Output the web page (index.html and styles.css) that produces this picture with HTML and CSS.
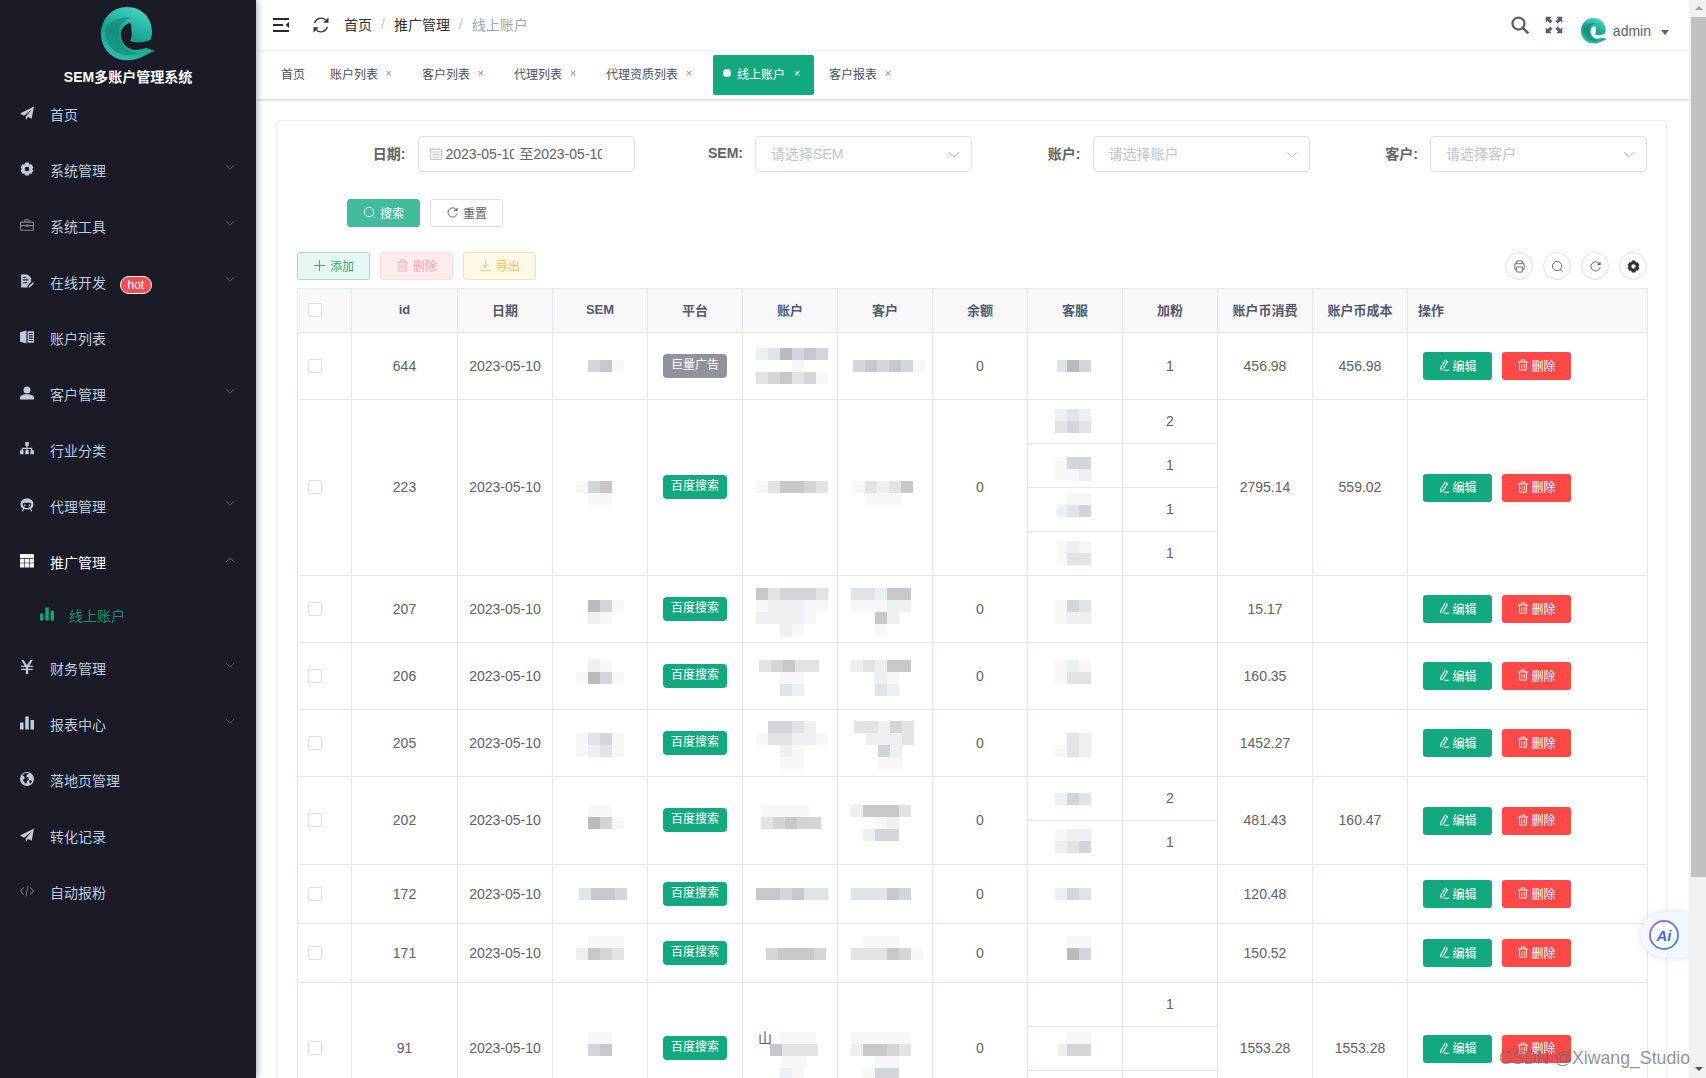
FILE: index.html
```html
<!DOCTYPE html>
<html lang="zh-CN">
<head>
<meta charset="utf-8">
<title>SEM多账户管理系统</title>
<link rel="stylesheet" href="styles.css">
</head>
<body>
<svg class="sprite" width="0" height="0">
  <defs>
    <linearGradient id="lg" x1="0.7" y1="0" x2="0.3" y2="1"><stop offset="0" stop-color="#43d8c0"/><stop offset="0.55" stop-color="#15a08e"/><stop offset="1" stop-color="#2fc3a8"/></linearGradient>
  </defs>
  <symbol id="logo" viewBox="0 0 54 54">
    <path fill="url(#lg)" d="M26 0C41 0 51 11 51 25c0 7-3 12-8 15l11 4c-7 2-14 8-24 9C12 55 0 42 0 27 0 12 11 0 26 0z"/>
    <path fill="#12806f" opacity=".55" d="M5 20C10 14 20 9 30 11 20 14 16 22 19 32c3 9 10 14 18 14-10 5-24 2-30-10C4 30 4 25 5 20z"/>
    <path class="pocket" d="M30 16c-8 1-11 8-10 14 1 7 7 12 13 13 5 0 10-1 14-3 3-2 5-4 9-7v-3c-4 2-8 4-14 5-6 1-13 0-13-2 3-2 1-11 1-17z"/>
  </symbol>
  <symbol id="i-plane" viewBox="0 0 24 24"><path d="M24 1 0 13l7 3.500L20 6 10 18v6l4-5 6 3z"/></symbol>
  <symbol id="i-gear" viewBox="0 0 24 24"><path fill-rule="evenodd" d="M9 1h6l1.500 3.500L20 4l3 6-2.500 2 2.500 2-3 6-3.500-.5L15 23H9l-1.500-3.500L4 20l-3-6 2.500-2L1 10l3-6 3.500.5zM12 8a4 4 0 1 0 0 8 4 4 0 0 0 0-8z"/></symbol>
  <symbol id="i-case" viewBox="0 0 24 24"><path fill-rule="evenodd" d="M8 2h8l1 4h5a2 2 0 0 1 2 2v12a2 2 0 0 1-2 2H2a2 2 0 0 1-2-2V8a2 2 0 0 1 2-2h5zm1.500 2L9 6h6l-.5-2zM2 8v4h8v-1h4v1h8V8zm0 6v6h20v-6h-8v1h-4v-1z"/></symbol>
  <symbol id="i-file" viewBox="0 0 24 24"><path fill-rule="evenodd" d="M2 1h11l6 6v6l-6 7v3H2zm3 8v2h10V9zm0 5v2h8v-2zm0-9v2h6V5z"/><path d="M22 14l2 2-7 7h-2v-2z"/></symbol>
  <symbol id="i-book" viewBox="0 0 24 24"><path d="M0 4l11-3v22L0 20z"/><path fill-rule="evenodd" d="M13 2h11v20H13zm2 3v2h7V5zm0 4v2h7V9zm0 4v2h7v-2zm0 4v2h7v-2z"/></symbol>
  <symbol id="i-user" viewBox="0 0 24 24"><circle cx="12" cy="7" r="6"/><path d="M0 23v-3c0-4 5-6 12-6s12 2 12 6v3z"/></symbol>
  <symbol id="i-tree" viewBox="0 0 24 24"><path d="M9 0h6v7h-2v3h8v4h3v7h-6v-7h1v-2h-6v2h2v7H9v-7h2v-2H5v2h1v7H0v-7h3v-4h8V7H9z"/></symbol>
  <symbol id="i-bot" viewBox="0 0 24 24"><path fill-rule="evenodd" d="M12 1c7 0 11 4 11 10 0 4-2 6-4 7l2 5h-2l-2-4c-3 1-7 1-10 0l-2 4H3l2-5c-2-1-4-3-4-7C1 5 5 1 12 1zM5 9c-1 4 2 8 7 8s8-4 7-8c-3-1-11-1-14 0zm3 2a1.500 1.500 0 1 1 0 3 1.500 1.500 0 0 1 0-3zm8 0a1.500 1.500 0 1 1 0 3 1.500 1.500 0 0 1 0-3z"/></symbol>
  <symbol id="i-table" viewBox="0 0 24 24"><path d="M0 0h24v7H0zM0 8h7.500v7H0zM8.500 8h7v7h-7zM16.500 8H24v7h-7.500zM0 16h7.500v7H0zM8.500 16h7v7h-7zM16.500 16H24v7h-7.500z"/></symbol>
  <symbol id="i-bars" viewBox="0 0 24 24"><path d="M0 11h6v12H0zM9 1h6v22H9zM18 7h6v16h-6z"/></symbol>
  <symbol id="i-yen" viewBox="0 0 24 24"><path d="M2 0h4l6 9 6-9h4l-6 10h6v2h-8v3h8v2h-8v7h-4v-7H2v-2h8v-3H2v-2h6z"/></symbol>
  <symbol id="i-globe" viewBox="0 0 24 24"><path fill-rule="evenodd" d="M12 0a12 12 0 1 1 0 24 12 12 0 0 1 0-24zM4 5c2 2 4 2 4 5s-3 2-3 4 3 2 4 6c2 1 3-2 3-4s4-2 3-5-4-1-4-4 3-3 4-5c-4-1-8 0-11 3zm14 9c-2 0-3 2-2 4s3 1 4-1-1-3-2-3z"/></symbol>
  <symbol id="i-code" viewBox="0 0 24 24"><path d="M6 5 0 12l6 7 1-1-5-6 5-6zM18 5l-1 1 5 6-5 6 1 1 6-7zM13 3h1.500L11 21H9.500z"/></symbol>
  <symbol id="i-chev" viewBox="0 0 12 8"><path fill="none" stroke="currentColor" d="M1 1l5 5 5-5"/></symbol>
  <symbol id="i-search" viewBox="0 0 24 24"><circle cx="10" cy="10" r="8" fill="none" stroke="currentColor" stroke-width="3"/><path d="M16 16l7 7" stroke="currentColor" stroke-width="3.500"/></symbol>
  <symbol id="i-full" viewBox="0 0 24 24"><path d="M1 1h8L6.500 3.500 10 7 7 10 3.500 6.500 1 9zM23 1v8l-2.500-2.500L17 10l-3-3 3.500-3.500L15 1zM1 23v-8l2.500 2.500L7 14l3 3-3.500 3.500L9 23zM23 23h-8l2.500-2.500L14 17l3-3 3.500 3.500L23 15z"/></symbol>
  <symbol id="i-menu" viewBox="0 0 16 14"><path d="M0 0h16v2H0zM0 6h10v2H0zM0 12h16v2H0zM16 4v6l-3.500-3z"/></symbol>
  <symbol id="i-sync" viewBox="0 0 24 24"><path fill="none" stroke="currentColor" stroke-width="1.800" d="M3.500 9.500A9 9 0 0 1 18.500 5.500M20.500 14.500A9 9 0 0 1 5.500 18.500"/><path d="M22 2v7h-7zM2 22v-7h7z"/></symbol>
  <symbol id="i-lens" viewBox="0 0 14 14"><circle cx="6.500" cy="6.500" r="5" fill="none" stroke="currentColor"/><path d="M10 10l2.500 2.500" stroke="currentColor"/></symbol>
  <symbol id="i-redo" viewBox="0 0 14 14"><path fill="none" stroke="currentColor" d="M11.500 4.500A5 5 0 1 0 12 8"/><path d="M12.500 1.500v4h-4z"/></symbol>
  <symbol id="i-trash" viewBox="0 0 14 14"><path fill="none" stroke="currentColor" d="M3 3.500v9.500h8V3.500M1 3.500h12M5 3.500V1h4v2.500M5.500 6v5M8.500 6v5"/></symbol>
  <symbol id="i-pen" viewBox="0 0 14 14"><path fill="none" stroke="currentColor" stroke-width="1.200" d="M8.500 1.500l2.500 1.500-5 8.500-2.500 1-.3-2.700zM7 13h6"/></symbol>
  <symbol id="i-plus" viewBox="0 0 14 14"><path d="M6.500 1h1v5.500H13v1H7.500V13h-1V7.500H1v-1h5.500z"/></symbol>
  <symbol id="i-down" viewBox="0 0 14 14"><path fill="none" stroke="currentColor" d="M7 1v8M4 6l3 3 3-3M2 12.500h10"/></symbol>
  <symbol id="i-print" viewBox="0 0 14 14"><path fill="none" stroke="currentColor" d="M4 4V1h6v3M3.500 10H2V4h10v6h-1.500M4 7.500h6V13H4z"/></symbol>
  <symbol id="i-cal" viewBox="0 0 14 14"><path fill="none" stroke="currentColor" d="M1.500 2.500h11v10h-11zM1.500 5h11M4 1v2M10 1v2M3.500 7.500h7M3.500 10h7"/></symbol>
</svg>

<aside class="sidebar">
  <div class="brand">
    <svg class="brand-logo"><use href="#logo"/></svg>
    <div class="brand-name">SEM多账户管理系统</div>
  </div>
  <ul class="menu">
    <li class="menu-item"><svg class="mi"><use href="#i-plane"/></svg><span>首页</span></li>
    <li class="menu-item"><svg class="mi"><use href="#i-gear"/></svg><span>系统管理</span><svg class="chev"><use href="#i-chev"/></svg></li>
    <li class="menu-item"><svg class="mi mi-dim"><use href="#i-case"/></svg><span>系统工具</span><svg class="chev"><use href="#i-chev"/></svg></li>
    <li class="menu-item"><svg class="mi"><use href="#i-file"/></svg><span>在线开发</span><b class="hot">hot</b><svg class="chev"><use href="#i-chev"/></svg></li>
    <li class="menu-item"><svg class="mi"><use href="#i-book"/></svg><span>账户列表</span></li>
    <li class="menu-item"><svg class="mi"><use href="#i-user"/></svg><span>客户管理</span><svg class="chev"><use href="#i-chev"/></svg></li>
    <li class="menu-item"><svg class="mi"><use href="#i-tree"/></svg><span>行业分类</span></li>
    <li class="menu-item"><svg class="mi"><use href="#i-bot"/></svg><span>代理管理</span><svg class="chev"><use href="#i-chev"/></svg></li>
    <li class="menu-item open"><svg class="mi"><use href="#i-table"/></svg><span>推广管理</span><svg class="chev up"><use href="#i-chev"/></svg></li>
    <li class="menu-sub"><svg class="mi"><use href="#i-bars"/></svg><span>线上账户</span></li>
    <li class="menu-item"><svg class="mi"><use href="#i-yen"/></svg><span>财务管理</span><svg class="chev"><use href="#i-chev"/></svg></li>
    <li class="menu-item"><svg class="mi"><use href="#i-bars"/></svg><span>报表中心</span><svg class="chev"><use href="#i-chev"/></svg></li>
    <li class="menu-item"><svg class="mi"><use href="#i-globe"/></svg><span>落地页管理</span></li>
    <li class="menu-item"><svg class="mi"><use href="#i-plane"/></svg><span>转化记录</span></li>
    <li class="menu-item"><svg class="mi mi-dim"><use href="#i-code"/></svg><span>自动报粉</span></li>
  </ul>
</aside>

<main class="main">
  <header class="topbar">
    <svg class="tb-menu"><use href="#i-menu"/></svg>
    <svg class="tb-sync"><use href="#i-sync"/></svg>
    <nav class="crumbs"><span>首页</span><i>/</i><span>推广管理</span><i>/</i><span class="crumb-now">线上账户</span></nav>
    <div class="tb-right">
      <svg class="tb-icon"><use href="#i-search"/></svg>
      <svg class="tb-icon"><use href="#i-full"/></svg>
      <svg class="avatar"><use href="#logo"/></svg>
      <span class="admin">admin</span>
      <i class="caret"></i>
    </div>
  </header>
  <div class="tabs">
    <span class="tab tab-first">首页</span>
    <span class="tab">账户列表<i>×</i></span>
    <span class="tab">客户列表<i>×</i></span>
    <span class="tab">代理列表<i>×</i></span>
    <span class="tab">代理资质列表<i>×</i></span>
    <span class="tab tab-on"><u></u>线上账户<i>×</i></span>
    <span class="tab tab-last">客户报表<i>×</i></span>
  </div>

  <section class="content">
    <div class="card">
      <form class="filters">
        <label class="field"><b>日期:</b>
          <span class="input"><svg class="cal"><use href="#i-cal"/></svg><span class="dv">2023-05-10</span><span class="sep">至</span><span class="dv">2023-05-10</span></span>
        </label>
        <label class="field"><b>SEM:</b><span class="input sel">请选择SEM<svg class="sel-chev"><use href="#i-chev"/></svg></span></label>
        <label class="field"><b>账户:</b><span class="input sel">请选择账户<svg class="sel-chev"><use href="#i-chev"/></svg></span></label>
        <label class="field"><b>客户:</b><span class="input sel">请选择客户<svg class="sel-chev"><use href="#i-chev"/></svg></span></label>
      </form>
      <div class="search-row">
        <span class="btn btn-search"><svg><use href="#i-lens"/></svg>搜索</span>
        <span class="btn btn-reset"><svg><use href="#i-redo"/></svg>重置</span>
      </div>
      <div class="toolbar">
        <span class="btn btn-add"><svg><use href="#i-plus"/></svg>添加</span>
        <span class="btn btn-del"><svg><use href="#i-trash"/></svg>删除</span>
        <span class="btn btn-exp"><svg><use href="#i-down"/></svg>导出</span>
        <span class="tools">
          <span class="round"><svg><use href="#i-print"/></svg></span>
          <span class="round"><svg><use href="#i-lens"/></svg></span>
          <span class="round"><svg><use href="#i-redo"/></svg></span>
          <span class="round"><svg class="dark"><use href="#i-gear"/></svg></span>
        </span>
      </div>
      <table class="grid">
        <colgroup><col class="w54"><col class="w106"><col class="w95"><col class="w95"><col class="w95"><col class="w95"><col class="w95"><col class="w95"><col class="w95"><col class="w95"><col class="w95"><col class="w95"><col class="w240"></colgroup>
        <thead>
          <tr><th class="ck"><i class="box"></i></th><th>id</th><th>日期</th><th>SEM</th><th>平台</th><th>账户</th><th>客户</th><th>余额</th><th>客服</th><th>加粉</th><th>账户币消费</th><th>账户币成本</th><th class="left">操作</th></tr>
        </thead>
        <tbody>
          <tr class="h67">
            <td class="ck"><i class="box"></i></td><td>644</td><td>2023-05-10</td>
            <td class="m"><svg class="mos"><rect x="30" y="16" class="c"/><rect x="42" y="16" class="b"/><rect x="54" y="16" class="f"/></svg></td>
            <td><span class="tag tag-gray">巨量广告</span></td>
            <td class="m"><svg class="mos"><rect x="8" y="4" class="e"/><rect x="20" y="4" class="d"/><rect x="32" y="4" class="a"/><rect x="44" y="4" class="c"/><rect x="56" y="4" class="b"/><rect x="68" y="4" class="c"/><rect x="44" y="16" class="f"/><rect x="8" y="28" class="d"/><rect x="20" y="28" class="c"/><rect x="32" y="28" class="b"/><rect x="44" y="28" class="d"/><rect x="56" y="28" class="c"/><rect x="68" y="28" class="f"/></svg></td>
            <td class="m"><svg class="mos"><rect x="10" y="16" class="c"/><rect x="22" y="16" class="b"/><rect x="34" y="16" class="c"/><rect x="46" y="16" class="b"/><rect x="58" y="16" class="c"/><rect x="70" y="16" class="f"/></svg></td>
            <td>0</td>
            <td class="m"><svg class="mos"><rect x="24" y="16" class="d"/><rect x="34" y="16" class="a"/><rect x="46" y="16" class="c"/></svg></td>
            <td>1</td><td>456.98</td><td>456.98</td>
            <td class="left"><span class="acts"><span class="act act-edit"><svg><use href="#i-pen"/></svg>编辑</span><span class="act act-del"><svg><use href="#i-trash"/></svg>删除</span></span></td>
          </tr>

          <tr class="h44">
            <td rowspan="4" class="ck"><i class="box"></i></td><td rowspan="4">223</td><td rowspan="4">2023-05-10</td>
            <td rowspan="4" class="m"><svg class="mos"><rect x="18" y="15" class="f"/><rect x="30" y="15" class="c"/><rect x="42" y="15" class="b"/><rect x="30" y="27" class="f"/><rect x="42" y="27" class="f"/></svg></td>
            <td rowspan="4"><span class="tag">百度搜索</span></td>
            <td rowspan="4" class="m"><svg class="mos"><rect x="8" y="15" class="f"/><rect x="20" y="15" class="d"/><rect x="32" y="15" class="b"/><rect x="44" y="15" class="b"/><rect x="56" y="15" class="c"/><rect x="68" y="15" class="d"/></svg></td>
            <td rowspan="4" class="m"><svg class="mos"><rect x="10" y="15" class="f"/><rect x="22" y="15" class="d"/><rect x="34" y="15" class="e"/><rect x="46" y="15" class="d"/><rect x="58" y="15" class="b"/><rect x="22" y="27" class="f"/><rect x="34" y="27" class="f"/><rect x="46" y="27" class="f"/></svg></td>
            <td rowspan="4">0</td>
            <td class="m"><svg class="mos"><rect x="22" y="9" class="e"/><rect x="34" y="9" class="d"/><rect x="46" y="9" class="e"/><rect x="22" y="21" class="d"/><rect x="34" y="21" class="c"/><rect x="46" y="21" class="d"/></svg></td>
            <td>2</td>
            <td rowspan="4">2795.14</td><td rowspan="4">559.02</td>
            <td rowspan="4" class="left"><span class="acts"><span class="act act-edit"><svg><use href="#i-pen"/></svg>编辑</span><span class="act act-del"><svg><use href="#i-trash"/></svg>删除</span></span></td>
          </tr>
          <tr class="h44"><td class="m"><svg class="mos"><rect x="22" y="13" class="f"/><rect x="34" y="13" class="c"/><rect x="46" y="13" class="c"/><rect x="22" y="25" class="f"/><rect x="34" y="25" class="f"/><rect x="46" y="25" class="e"/></svg></td><td>1</td></tr>
          <tr class="h44"><td class="m"><svg class="mos"><rect x="34" y="5" class="f"/><rect x="46" y="5" class="f"/><rect x="24" y="17" class="e"/><rect x="34" y="17" class="d"/><rect x="46" y="17" class="c"/></svg></td><td>1</td></tr>
          <tr class="h44"><td class="m"><svg class="mos"><rect x="24" y="9" class="f"/><rect x="34" y="9" class="e"/><rect x="46" y="9" class="f"/><rect x="24" y="21" class="f"/><rect x="34" y="21" class="d"/><rect x="46" y="21" class="d"/></svg></td><td>1</td></tr>

          <tr class="h67">
            <td class="ck"><i class="box"></i></td><td>207</td><td>2023-05-10</td>
            <td class="m"><svg class="mos"><rect x="30" y="13" class="a"/><rect x="42" y="13" class="c"/><rect x="54" y="13" class="f"/><rect x="30" y="25" class="e"/><rect x="42" y="25" class="f"/></svg></td>
            <td><span class="tag">百度搜索</span></td>
            <td class="m"><svg class="mos"><rect x="8" y="1" class="b"/><rect x="20" y="1" class="d"/><rect x="32" y="1" class="c"/><rect x="44" y="1" class="c"/><rect x="56" y="1" class="c"/><rect x="68" y="1" class="d"/><rect x="8" y="13" class="f"/><rect x="20" y="13" class="e"/><rect x="32" y="13" class="e"/><rect x="44" y="13" class="e"/><rect x="56" y="13" class="f"/><rect x="68" y="13" class="f"/><rect x="8" y="25" class="e"/><rect x="20" y="25" class="e"/><rect x="32" y="25" class="e"/><rect x="44" y="25" class="e"/><rect x="56" y="25" class="f"/><rect x="32" y="37" class="e"/><rect x="44" y="37" class="f"/></svg></td>
            <td class="m"><svg class="mos"><rect x="8" y="1" class="d"/><rect x="20" y="1" class="d"/><rect x="32" y="1" class="e"/><rect x="44" y="1" class="b"/><rect x="56" y="1" class="b"/><rect x="8" y="13" class="f"/><rect x="20" y="13" class="f"/><rect x="32" y="13" class="f"/><rect x="44" y="13" class="e"/><rect x="56" y="13" class="e"/><rect x="32" y="25" class="b"/><rect x="44" y="25" class="e"/><rect x="32" y="37" class="f"/></svg></td>
            <td>0</td>
            <td class="m"><svg class="mos"><rect x="22" y="13" class="f"/><rect x="34" y="13" class="c"/><rect x="46" y="13" class="d"/><rect x="22" y="25" class="f"/><rect x="34" y="25" class="e"/><rect x="46" y="25" class="e"/></svg></td>
            <td></td><td>15.17</td><td></td>
            <td class="left"><span class="acts"><span class="act act-edit"><svg><use href="#i-pen"/></svg>编辑</span><span class="act act-del"><svg><use href="#i-trash"/></svg>删除</span></span></td>
          </tr>

          <tr class="h67">
            <td class="ck"><i class="box"></i></td><td>206</td><td>2023-05-10</td>
            <td class="m"><svg class="mos"><rect x="30" y="6" class="e"/><rect x="42" y="6" class="f"/><rect x="18" y="18" class="f"/><rect x="30" y="18" class="a"/><rect x="42" y="18" class="c"/><rect x="54" y="18" class="f"/></svg></td>
            <td><span class="tag">百度搜索</span></td>
            <td class="m"><svg class="mos"><rect x="11" y="6" class="d"/><rect x="23" y="6" class="c"/><rect x="35" y="6" class="b"/><rect x="47" y="6" class="d"/><rect x="59" y="6" class="d"/><rect x="32" y="18" class="f"/><rect x="44" y="18" class="f"/><rect x="32" y="30" class="d"/><rect x="44" y="30" class="e"/></svg></td>
            <td class="m"><svg class="mos"><rect x="8" y="6" class="e"/><rect x="20" y="6" class="d"/><rect x="32" y="6" class="e"/><rect x="44" y="6" class="b"/><rect x="56" y="6" class="b"/><rect x="32" y="18" class="e"/><rect x="44" y="18" class="f"/><rect x="32" y="30" class="d"/><rect x="44" y="30" class="e"/></svg></td>
            <td>0</td>
            <td class="m"><svg class="mos"><rect x="22" y="6" class="f"/><rect x="34" y="6" class="e"/><rect x="46" y="6" class="f"/><rect x="22" y="18" class="f"/><rect x="34" y="18" class="d"/><rect x="46" y="18" class="d"/></svg></td>
            <td></td><td>160.35</td><td></td>
            <td class="left"><span class="acts"><span class="act act-edit"><svg><use href="#i-pen"/></svg>编辑</span><span class="act act-del"><svg><use href="#i-trash"/></svg>删除</span></span></td>
          </tr>

          <tr class="h67">
            <td class="ck"><i class="box"></i></td><td>205</td><td>2023-05-10</td>
            <td class="m"><svg class="mos"><rect x="18" y="12" class="f"/><rect x="30" y="12" class="d"/><rect x="42" y="12" class="c"/><rect x="54" y="12" class="f"/><rect x="18" y="24" class="f"/><rect x="30" y="24" class="e"/><rect x="42" y="24" class="d"/><rect x="54" y="24" class="f"/></svg></td>
            <td><span class="tag">百度搜索</span></td>
            <td class="m"><svg class="mos"><rect x="20" y="0" class="c"/><rect x="32" y="0" class="c"/><rect x="44" y="0" class="d"/><rect x="56" y="0" class="e"/><rect x="8" y="12" class="f"/><rect x="20" y="12" class="d"/><rect x="32" y="12" class="d"/><rect x="44" y="12" class="e"/><rect x="56" y="12" class="e"/><rect x="68" y="12" class="f"/><rect x="32" y="24" class="e"/><rect x="44" y="24" class="f"/><rect x="32" y="36" class="f"/><rect x="44" y="36" class="f"/></svg></td>
            <td class="m"><svg class="mos"><rect x="11" y="0" class="d"/><rect x="23" y="0" class="d"/><rect x="35" y="0" class="e"/><rect x="47" y="0" class="c"/><rect x="59" y="0" class="d"/><rect x="23" y="12" class="e"/><rect x="35" y="12" class="e"/><rect x="47" y="12" class="e"/><rect x="59" y="12" class="d"/><rect x="35" y="24" class="c"/><rect x="47" y="24" class="e"/><rect x="35" y="36" class="f"/><rect x="47" y="36" class="f"/></svg></td>
            <td>0</td>
            <td class="m"><svg class="mos"><rect x="34" y="12" class="d"/><rect x="46" y="12" class="e"/><rect x="22" y="24" class="f"/><rect x="34" y="24" class="d"/><rect x="46" y="24" class="e"/></svg></td>
            <td></td><td>1452.27</td><td></td>
            <td class="left"><span class="acts"><span class="act act-edit"><svg><use href="#i-pen"/></svg>编辑</span><span class="act act-del"><svg><use href="#i-trash"/></svg>删除</span></span></td>
          </tr>

          <tr class="h44">
            <td rowspan="2" class="ck"><i class="box"></i></td><td rowspan="2">202</td><td rowspan="2">2023-05-10</td>
            <td rowspan="2" class="m"><svg class="mos"><rect x="30" y="6" class="f"/><rect x="42" y="6" class="f"/><rect x="30" y="18" class="a"/><rect x="42" y="18" class="c"/><rect x="54" y="18" class="f"/></svg></td>
            <td rowspan="2"><span class="tag">百度搜索</span></td>
            <td rowspan="2" class="m"><svg class="mos"><rect x="13" y="6" class="f"/><rect x="25" y="6" class="f"/><rect x="37" y="6" class="f"/><rect x="49" y="6" class="f"/><rect x="13" y="18" class="d"/><rect x="25" y="18" class="c"/><rect x="37" y="18" class="b"/><rect x="49" y="18" class="c"/><rect x="61" y="18" class="c"/></svg></td>
            <td rowspan="2" class="m"><svg class="mos"><rect x="8" y="6" class="e"/><rect x="20" y="6" class="b"/><rect x="32" y="6" class="b"/><rect x="44" y="6" class="b"/><rect x="56" y="6" class="d"/><rect x="32" y="18" class="f"/><rect x="44" y="18" class="e"/><rect x="20" y="30" class="e"/><rect x="32" y="30" class="c"/><rect x="44" y="30" class="c"/></svg></td>
            <td rowspan="2">0</td>
            <td class="m"><svg class="mos"><rect x="22" y="16" class="e"/><rect x="34" y="16" class="c"/><rect x="46" y="16" class="d"/></svg></td>
            <td>2</td>
            <td rowspan="2">481.43</td><td rowspan="2">160.47</td>
            <td rowspan="2" class="left"><span class="acts"><span class="act act-edit"><svg><use href="#i-pen"/></svg>编辑</span><span class="act act-del"><svg><use href="#i-trash"/></svg>删除</span></span></td>
          </tr>
          <tr class="h44"><td class="m"><svg class="mos"><rect x="22" y="8" class="f"/><rect x="34" y="8" class="e"/><rect x="46" y="8" class="e"/><rect x="22" y="20" class="e"/><rect x="34" y="20" class="d"/><rect x="46" y="20" class="c"/></svg></td><td>1</td></tr>

          <tr class="h59">
            <td class="ck"><i class="box"></i></td><td>172</td><td>2023-05-10</td>
            <td class="m"><svg class="mos"><rect x="21" y="16" class="d"/><rect x="33" y="16" class="b"/><rect x="45" y="16" class="b"/><rect x="57" y="16" class="c"/></svg></td>
            <td><span class="tag">百度搜索</span></td>
            <td class="m"><svg class="mos"><rect x="8" y="16" class="b"/><rect x="20" y="16" class="b"/><rect x="32" y="16" class="c"/><rect x="44" y="16" class="b"/><rect x="56" y="16" class="d"/><rect x="68" y="16" class="d"/></svg></td>
            <td class="m"><svg class="mos"><rect x="8" y="16" class="d"/><rect x="20" y="16" class="d"/><rect x="32" y="16" class="d"/><rect x="44" y="16" class="b"/><rect x="56" y="16" class="c"/></svg></td>
            <td>0</td>
            <td class="m"><svg class="mos"><rect x="22" y="16" class="e"/><rect x="34" y="16" class="c"/><rect x="46" y="16" class="d"/></svg></td>
            <td></td><td>120.48</td><td></td>
            <td class="left"><span class="acts"><span class="act act-edit"><svg><use href="#i-pen"/></svg>编辑</span><span class="act act-del"><svg><use href="#i-trash"/></svg>删除</span></span></td>
          </tr>

          <tr class="h59">
            <td class="ck"><i class="box"></i></td><td>171</td><td>2023-05-10</td>
            <td class="m"><svg class="mos"><rect x="30" y="5" class="f"/><rect x="42" y="5" class="f"/><rect x="54" y="5" class="f"/><rect x="18" y="17" class="e"/><rect x="30" y="17" class="b"/><rect x="42" y="17" class="c"/><rect x="54" y="17" class="d"/></svg></td>
            <td><span class="tag">百度搜索</span></td>
            <td class="m"><svg class="mos"><rect x="18" y="17" class="c"/><rect x="30" y="17" class="b"/><rect x="42" y="17" class="b"/><rect x="54" y="17" class="b"/><rect x="66" y="17" class="c"/></svg></td>
            <td class="m"><svg class="mos"><rect x="20" y="5" class="f"/><rect x="32" y="5" class="f"/><rect x="44" y="5" class="f"/><rect x="8" y="17" class="d"/><rect x="20" y="17" class="d"/><rect x="32" y="17" class="d"/><rect x="44" y="17" class="b"/><rect x="56" y="17" class="c"/><rect x="68" y="17" class="f"/></svg></td>
            <td>0</td>
            <td class="m"><svg class="mos"><rect x="34" y="5" class="f"/><rect x="46" y="5" class="f"/><rect x="34" y="17" class="a"/><rect x="46" y="17" class="c"/></svg></td>
            <td></td><td>150.52</td><td></td>
            <td class="left"><span class="acts"><span class="act act-edit"><svg><use href="#i-pen"/></svg>编辑</span><span class="act act-del"><svg><use href="#i-trash"/></svg>删除</span></span></td>
          </tr>

          <tr class="h44">
            <td rowspan="3" class="ck"><i class="box"></i></td><td rowspan="3">91</td><td rowspan="3">2023-05-10</td>
            <td rowspan="3" class="m"><svg class="mos"><rect x="30" y="5" class="f"/><rect x="42" y="5" class="f"/><rect x="30" y="17" class="c"/><rect x="42" y="17" class="b"/></svg></td>
            <td rowspan="3"><span class="tag">百度搜索</span></td>
            <td rowspan="3" class="m"><svg class="mos"><text x="10" y="16" class="frag">山</text><rect x="32" y="5" class="f"/><rect x="44" y="5" class="f"/><rect x="56" y="5" class="f"/><rect x="22" y="17" class="b"/><rect x="34" y="17" class="d"/><rect x="46" y="17" class="d"/><rect x="58" y="17" class="d"/><rect x="34" y="29" class="f"/><rect x="46" y="29" class="f"/><rect x="32" y="41" class="e"/><rect x="44" y="41" class="f"/></svg></td>
            <td rowspan="3" class="m"><svg class="mos"><rect x="8" y="5" class="f"/><rect x="20" y="5" class="f"/><rect x="32" y="5" class="f"/><rect x="44" y="5" class="f"/><rect x="56" y="5" class="f"/><rect x="8" y="17" class="e"/><rect x="20" y="17" class="b"/><rect x="32" y="17" class="b"/><rect x="44" y="17" class="c"/><rect x="56" y="17" class="d"/><rect x="32" y="29" class="f"/><rect x="44" y="29" class="f"/><rect x="20" y="41" class="f"/><rect x="32" y="41" class="c"/><rect x="44" y="41" class="c"/></svg></td>
            <td rowspan="3">0</td>
            <td></td>
            <td>1</td>
            <td rowspan="3">1553.28</td><td rowspan="3">1553.28</td>
            <td rowspan="3" class="left"><span class="acts"><span class="act act-edit"><svg><use href="#i-pen"/></svg>编辑</span><span class="act act-del"><svg><use href="#i-trash"/></svg>删除</span></span></td>
          </tr>
          <tr class="h44"><td class="m"><svg class="mos"><rect x="34" y="5" class="f"/><rect x="46" y="5" class="f"/><rect x="25" y="17" class="e"/><rect x="34" y="17" class="c"/><rect x="46" y="17" class="c"/></svg></td><td></td></tr>
          <tr class="h44"><td></td><td></td></tr>
        </tbody>
      </table>
    </div>
  </section>
  <div class="ai-fab"><span class="ai-ring">Ai</span></div>
</main>

<div class="scrollbar">
  <i class="sb-up"></i>
  <span class="sb-thumb"></span>
  <span class="sb-track"></span>
  <i class="sb-down"></i>
</div>
<div class="watermark">CSDN @Xiwang_Studio</div>
</body>
</html>
```

FILE: styles.css
```css
* { box-sizing: border-box; }
html, body { margin: 0; height: 100%; }
body {
  display: flex;
  position: relative;
  height: 1078px;
  overflow: hidden;
  background: #fff;
  color: #606266;
  font-family: "Liberation Sans", "Noto Sans CJK SC", sans-serif;
  font-size: 14px;
}
.sprite { position: absolute; }
ul { list-style: none; margin: 0; padding: 0; }
i, u { font-style: normal; text-decoration: none; }

/* sidebar */
.sidebar {
  flex: 0 0 256px;
  background: #1a1b26;
  color: #bfcbd9;
  z-index: 3;
  box-shadow: 2px 0 6px rgba(0, 21, 41, .3);
  --pocket: #1a1b26;
}
.pocket { fill: var(--pocket); }
.brand { height: 86px; padding-top: 7px; text-align: center; }
.brand-logo { display: block; width: 54px; height: 54px; margin: 0 0 0 101px; }
.brand-name { margin-top: 7px; color: #fff; font-size: 14px; font-weight: 700; line-height: 18px; }
.menu-item, .menu-sub { display: flex; align-items: center; }
.menu-item { height: 56px; padding: 0 21px 0 20px; }
.menu-sub { height: 50px; padding-left: 40px; color: #1b8f6f; }
.mi { width: 14px; height: 14px; margin: 0 16px 2px 0; fill: #bfcbd9; flex: none; }
.mi-dim { fill: #7d8590; }
.menu-sub .mi { margin-right: 15px; fill: #14a37d; }
.open { color: #fff; }
.open .mi { fill: #f4f4f5; }
.chev { width: 10px; height: 7px; margin: 0 0 6px auto; color: #6a6c76; }
.chev.up { transform: rotate(180deg); color: #808088; }
.hot {
  margin: 6px 0 0 14px;
  padding: 0 6.500px;
  height: 18px;
  line-height: 16px;
  background: #f54e52;
  color: #fff;
  border: 1px solid #fff;
  border-radius: 10px;
  font-size: 12px;
  font-weight: 400;
}

/* main */
.main { flex: 1; min-width: 0; position: relative; overflow: hidden; --pocket: #fff; }
.topbar {
  display: flex;
  align-items: center;
  height: 50px;
  position: relative;
  z-index: 2;
  background: #fff;
  box-shadow: 0 1px 4px rgba(0, 21, 41, .08);
}
.tb-menu { width: 16px; height: 14px; margin-left: 17px; fill: #2a2a2a; }
.tb-sync { width: 18px; height: 18px; margin-left: 23px; fill: #303133; color: #303133; }
.crumbs { margin-left: 14px; padding-bottom: 3px; color: #303133; display: flex; align-items: center; }
.crumbs i { margin: 0 9px; color: #c0c4cc; }
.crumb-now { color: #97a8be; }
.tb-right { margin-left: auto; display: flex; align-items: center; position: relative; padding-right: 20px; }
.tb-icon { width: 18px; height: 18px; margin: 0 16px 0 0; fill: #5a5e66; color: #5a5e66; position: relative; top: 0; }
.avatar { width: 26px; height: 26px; margin: 12px 6px 0 2px; }
.admin { color: #5a5e66; margin-top: 12px; font-size: 14px; }
.caret {
  margin: 15px 0 0 10px;
  border-top: 5px solid #5a5e66;
  border-left: 4px solid transparent;
  border-right: 4px solid transparent;
}
.tabs {
  display: flex;
  align-items: center;
  height: 49px;
  padding-left: 11px;
  position: relative;
  z-index: 1;
  background: #fff;
  box-shadow: 0 1px 3px rgba(0, 0, 0, .2);
  font-size: 12px;
  color: #495060;
}
.tab { display: flex; align-items: center; height: 40px; padding: 0 14px 3px; white-space: nowrap; }
.tab i { width: 16px; text-align: right; padding-right: 2px; color: #8a8f99; font-size: 11px; }
.tab-first { padding-right: 11px; }
.tab-on {
  margin-left: 5px;
  width: 101px;
  padding: 0 0 3px 10px;
  background: #13a97f;
  color: #fff;
  border-radius: 2px;
}
.tab-on u { width: 8px; height: 8px; margin-right: 6px; border-radius: 50%; background: #fff; }
.tab-on i { color: #fff; width: 17px; }
.tab-last { padding-left: 15px; }

.content { padding: 21px 22px 0 20px; }
.card { border: 1px solid #ebeef5; border-radius: 4px; padding: 15px 19px 0 20px; }
.filters { display: grid; grid-template-columns: repeat(4, 1fr); height: 36px; }
.field { display: flex; justify-content: flex-end; align-items: center; padding-bottom: 0; }
.field b { margin: 0 12px 2px 0; }
.input {
  position: relative;
  display: flex;
  align-items: center;
  width: 217px;
  height: 36px;
  padding: 0 0 2px 10px;
  border: 1px solid #dcdfe6;
  border-radius: 4px;
  background: #fff;
}
.sel { padding-left: 15px; color: #c0c4cc; }
.sel-chev { position: absolute; right: 11px; top: 14px; width: 12px; height: 8px; color: #c0c4cc; }
.cal { width: 14px; height: 14px; margin: 2px 3px 0 0; color: #c0c4cc; flex: none; }
.dv { width: 68px; padding-top: 2px; overflow: hidden; white-space: nowrap; flex: none; }
.sep { margin: 0 0 0 6px; width: 14px; flex: none; }

.btn {
  display: inline-flex;
  align-items: center;
  justify-content: center;
  width: 73px;
  height: 28px;
  padding-bottom: 2px;
  border: 1px solid;
  border-radius: 3px;
  font-size: 12px;
  margin-right: 10px;
}
.btn svg { width: 13px; height: 13px; margin-right: 4px; fill: currentColor; }
.search-row { margin: 27px 0 0 50px; display: flex; }
.btn-search { background: #42bc9a; border-color: #42bc9a; color: #fff; }
.btn-reset { background: #fff; border-color: #dcdfe6; color: #606266; }
.toolbar { display: flex; align-items: center; margin-top: 25px; height: 28px; }
.btn-add { background: #e7f7f2; border-color: #a1ddcc; color: #2da888; }
.btn-del { background: #ffeded; border-color: #ffdbdb; color: #f7a6a6; }
.btn-exp { background: #fff8e6; border-color: #fde2a5; color: #f8c545; }
.tools { margin-left: auto; display: flex; gap: 10px; }
.round {
  display: flex;
  align-items: center;
  justify-content: center;
  width: 28px;
  height: 28px;
  border: 1px solid #dcdfe6;
  border-radius: 50%;
  color: #606266;
}
.round svg { width: 13px; height: 13px; fill: currentColor; }
.round .dark { fill: #303133; }

/* table */
.grid {
  margin-top: 8px;
  width: 1350px;
  table-layout: fixed;
  border-collapse: collapse;
  border: 1px solid #e4e7ed;
}
.w54 { width: 54px; }
.w106 { width: 106px; }
.w95 { width: 95px; }
.w240 { width: 240px; }
.grid th, .grid td {
  border: 1px solid #e4e7ed;
  padding: 0;
  text-align: center;
  vertical-align: middle;
}
.grid th { height: 44px; padding-bottom: 2px; background: #f8f8f9; color: #515a6e; font-size: 13px; font-weight: 700; }
.grid .left { text-align: left; padding-left: 10px; }
.grid td.left { padding-left: 15px; }
.h67 { height: 67px; }
.h59 { height: 59px; }
.h44 { height: 44px; }
.grid .h44 td:not(.m):not(.left) { padding-bottom: 2px; }
.grid .ck { text-align: left; padding-left: 10px; }
.box {
  display: block;
  width: 14px;
  height: 14px;
  background: #fff;
  border: 1px solid #dcdfe6;
  border-radius: 2px;
}
.tag {
  display: inline-block;
  width: 64px;
  height: 24px;
  line-height: 22px;
  border-radius: 4px;
  background: #13a97f;
  color: #fff;
  font-size: 12px;
  vertical-align: middle;
}
.tag-gray { background: #909399; }
.acts { display: flex; gap: 10px; }
.act {
  display: flex;
  align-items: center;
  justify-content: center;
  width: 69px;
  height: 28px;
  padding-bottom: 2px;
  border-radius: 3px;
  color: #fff;
  font-size: 12px;
}
.act svg { width: 12px; height: 12px; margin-right: 2px; fill: none; }
.act-edit { background: #13a97f; }
.act-del { background: #ff4949; }
.mos { display: block; width: 84px; height: 44px; margin: -4px auto; overflow: visible; }
.mos rect { width: 12px; height: 12px; }
.frag { fill: #606266; font-size: 14px; }
.a { fill: #bbbbbe; }
.b { fill: #c8c8cb; }
.c { fill: #d3d5d9; }
.d { fill: #e2e3e5; }
.e { fill: #eeeff0; }
.f { fill: #f7f7f8; }

.ai-fab {
  position: absolute;
  right: 0;
  top: 912px;
  z-index: 4;
  display: flex;
  align-items: center;
  width: 48px;
  height: 46px;
  padding-left: 8px;
  background: #f1f6ff;
  border-radius: 23px 0 0 23px;
  box-shadow: 0 0 6px rgba(110, 140, 240, .3);
}
.ai-ring {
  display: flex;
  align-items: center;
  justify-content: center;
  width: 30px;
  height: 30px;
  border-radius: 50%;
  border: 2px solid transparent;
  background: linear-gradient(#fff, #fff) padding-box, linear-gradient(135deg, #a56be0, #3f8fe0) border-box;
  color: #4a66d6;
  font-size: 15px;
  font-weight: 700;
  font-style: italic;
}

.scrollbar {
  flex: 0 0 17px;
  display: flex;
  flex-direction: column;
  align-items: flex-end;
  background: #f1f1f1;
  z-index: 5;
  position: relative;
}
.sb-up, .sb-down { flex: 0 0 17px; width: 15px; position: relative; }
.sb-up::after, .sb-down::after {
  content: "";
  position: absolute;
  left: 4px;
  border-left: 4px solid transparent;
  border-right: 4px solid transparent;
}
.sb-up::after { top: 6px; border-bottom: 4px solid #a3a3a3; }
.sb-down::after { top: 6px; border-top: 4px solid #505050; }
.sb-thumb { flex: 0 0 860px; width: 15px; background: #c1c1c1; }
.sb-track { flex: 1; }

.watermark {
  position: absolute;
  left: 1499px;
  top: 1046px;
  z-index: 6;
  color: rgba(110, 110, 110, .75);
  font-size: 17.700px;
  line-height: 24px;
  white-space: nowrap;
}
```
